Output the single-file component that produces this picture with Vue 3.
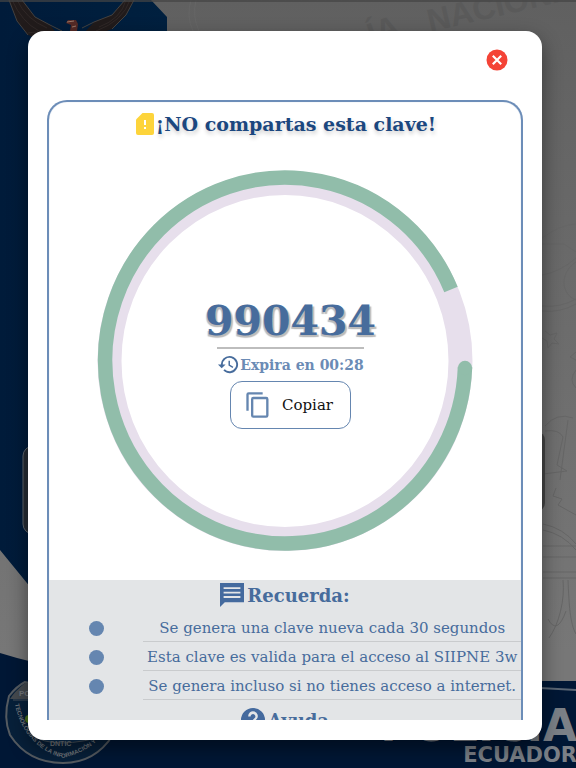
<script setup>
const code = '990434'
const reminders = [
  'Se genera una clave nueva cada 30 segundos',
  'Esta clave es valida para el acceso al SIIPNE 3w',
  'Se genera incluso si no tienes acceso a internet.',
]
</script>

<template>
  <div class="page">
    <svg class="backdrop" viewBox="0 0 576 768" preserveAspectRatio="xMidYMid slice" aria-hidden="true">
      <defs>
        <linearGradient id="grey" x1="0" y1="0" x2="0" y2="1">
          <stop offset="0" stop-color="#606060" />
          <stop offset="0.5" stop-color="#6e6e6e" />
          <stop offset="0.85" stop-color="#777" />
        </linearGradient>
        <linearGradient id="navy" x1="0" y1="0" x2="1" y2="0">
          <stop offset="0" stop-color="#001b3a" />
          <stop offset="1" stop-color="#00203f" />
        </linearGradient>
        <path id="motto" d="M15 704 C20 734 42 753 63 758 C82 754 103 742 114 718" />
      </defs>
      <rect width="576" height="768" fill="url(#grey)" />
      <g fill="none" stroke="#666" stroke-width="1">
        <path d="M542 238q20-14 34-14M542 244h22l12 8M576 262c-16 10-16 32 0 38M542 275q18-3 34-17M542 306q18 2 34-7M542 311q18 2 34-7M545 331l5 4 7-2-3 6 5 5-7-1-4 5-1-7-5-3M576 352l-6 5 6 3M576 370q-8 10 0 18M545 426q12-14 28-8M545 431q14-2 18 6l-6 28 10 6-24 3M568 420l-8 60M556 488l-3 8 9 3-4 6 18 10M543 524q20 4 33 20M543 530q20 4 33 20M543 546h33M543 557h33M543 572h33M543 578h33M563 580c2 20-4 44-14 58M568 580c1 24 2 44 8 54M548 619q9 17 18-8" />
        <path d="M191 0q-5 16 2 31M196 0q-4 16 3 31" />
      </g>
      <g class="watermark">
        <text transform="translate(372 46) rotate(-20)">ÍA</text>
        <text transform="translate(430 32) rotate(-13)">NACIONAL</text>
      </g>
      <path d="M0 0H151L167 17V45H40V599L0 550z" fill="url(#navy)" />
      <path d="M0 653Q60 672 160 681H576V768H0z" fill="#001735" />
      <path d="M540 687L576 689V691L540 689z" fill="#5a6674" />
      <g class="eagle">
        <path d="M9 0L17 21 28 35 38 39H61L50 25 35 17 22 0z" fill="#211b1b" />
        <path d="M134 0L126 15 112 29 99 34H83L94 22 112 15 125 0z" fill="#211b1b" />
        <path d="M12 0q10 22 27 31M17 0q9 19 30 28M28 33q9-2 22 1M126 0q-5 19-27 27M130 0q-7 21-34 31" fill="none" stroke="#302827" />
        <path d="M9 0l8 21 11 14M22 0l13 17 15 8 12 6M134 0l-8 15-14 14M125 0l-13 15-18 7-12 6" fill="none" stroke="#44413f" />
        <path d="M70 31l1-6-5-2 2-3h8l2 4-1 7z" fill="#562a26" />
        <path d="M67 22l7-1M72 27l4-1" stroke="#9a7769" />
      </g>
      <rect x="23" y="446" width="20" height="88" rx="10" fill="#272d35" stroke="#60666d" />
      <rect x="520" y="432" width="25" height="79" rx="8" fill="#454545" />
      <g class="crest">
        <path d="M25 682Q17 686 9 696Q3 718 10 735Q28 763 63 763Q95 763 113 735V700z" fill="#07203a" stroke="#555b61" stroke-width="2" />
        <path d="M25 683Q14 692 10 699H30V682z" fill="#454a4f" />
        <path d="M13 700h18v34q22 18 80 0v-34" fill="#0b3155" stroke="#48515a" />
        <circle cx="29" cy="719" r="4" fill="#4a721b" />
        <text x="19" y="696" font-size="8">PO</text>
        <text x="50" y="746" font-size="7">DNTIC</text>
        <text font-size="6"><textPath href="#motto">TECNOLOGÍAS DE LA INFORMACIÓN Y C</textPath></text>
      </g>
      <g class="police">
        <text x="577" y="741" font-size="44" text-anchor="end">POLICÍA</text>
        <text x="577" y="762" font-size="21" text-anchor="end">ECUADOR</text>
      </g>
      <rect width="576" height="2" fill="#444" fill-opacity="0.7" />
    </svg>

    <main class="overlay">
      <section class="dialog" role="dialog" aria-labelledby="warning">
        <header class="bar">
          <button class="close" type="button" aria-label="Cerrar">
            <svg viewBox="0 0 22 22"><circle cx="11" cy="11" r="10.5" fill="#f44336" /><path d="M6.8 6.8l8.4 8.4M15.2 6.8l-8.4 8.4" stroke="#fff" stroke-width="2.2" /></svg>
          </button>
        </header>

        <div class="card">
          <h1 id="warning" class="warning">
            <svg viewBox="0 0 18 22"><path d="M6.5 0H16q2 0 2 2v18q0 2-2 2H2q-2 0-2-2V6.500z" fill="#fdd43b" /><path d="M8 7h2v5H8zM8 14h2v2H8z" fill="#fff" /></svg>
            <span>¡NO compartas esta clave!</span>
          </h1>

          <div class="timer">
            <svg class="ring" viewBox="0 0 376 382" aria-hidden="true">
              <ellipse cx="188" cy="191" rx="175.5" ry="178" fill="none" stroke="#e7dfec" stroke-width="24" />
              <path d="M368 197A180 183 0 1 1 354 119.500" fill="none" stroke="#91bdaa" stroke-width="14.500" />
              <circle cx="368" cy="198" r="7.200" fill="#91bdaa" />
            </svg>
            <div class="readout">
              <output class="code">{{ code }}</output>
              <p class="expires">
                <svg viewBox="0 0 24 24"><path d="M13 3a9 9 0 0 0-9 9H1l3.900 3.900L9 12H6a7 7 0 1 1 2.050 4.950L6.640 18.360A9 9 0 1 0 13 3zm-1 5v5l4.280 2.540.720-1.210-3.500-2.080V8z" fill="#476c9c" /></svg>
                <span>Expira en 00:28</span>
              </p>
              <button class="copy" type="button">
                <svg viewBox="0 0 24 24"><path d="M16 1H4a2 2 0 0 0-2 2v14h2V3h12zm3 4H8a2 2 0 0 0-2 2v14a2 2 0 0 0 2 2h11a2 2 0 0 0 2-2V7a2 2 0 0 0-2-2zm0 16H8V7h11z" fill="#6586b0" /></svg>
                <span>Copiar</span>
              </button>
            </div>
          </div>

          <section class="info">
            <h2 class="heading">
              <svg viewBox="2 2 20 20"><path d="M2 2h20v16H6l-4 4zM5 5.500V7h14V5.500zm0 3.700v1.500h14V9.200zm0 3.700v1.500h14v-1.500z" fill="#446a9e" fill-rule="evenodd" /></svg>
              <span>Recuerda:</span>
            </h2>
            <ul class="list">
              <li v-for="item in reminders" :key="item">
                <span class="dot"></span>
                <span class="line">{{ item }}</span>
              </li>
            </ul>
            <h2 class="heading help">
              <svg viewBox="2 2 20 20"><path d="M12 2a10 10 0 1 0 0 20 10 10 0 0 0 0-20zm1 17h-2v-2h2zm2.070-7.750l-.900.920C13.450 12.900 13 13.500 13 15h-2v-.500c0-1.100.450-2.100 1.170-2.830l1.240-1.260A2 2 0 1 0 10 9H8a4 4 0 1 1 7.070 2.250z" fill="#446a9e" /></svg>
              <span>Ayuda</span>
            </h2>
          </section>
        </div>
      </section>
    </main>
  </div>
</template>

<style>
body {
  margin: 0;
}
</style>

<style scoped>
* {
  box-sizing: border-box;
}
.page {
  position: relative;
  height: 100vh;
  overflow: hidden;
  font-family: "DejaVu Serif", serif;
  color: #476c9c;
}
.backdrop {
  position: absolute;
  inset: 0;
  width: 100%;
  height: 100%;
}
.watermark text {
  font: bold 32px "Liberation Sans", sans-serif;
  fill: #5a5a5a;
}
.crest text {
  font-family: "Liberation Sans", sans-serif;
  font-weight: bold;
  fill: #72777c;
}
.police text {
  font-family: "DejaVu Sans", sans-serif;
  font-weight: bold;
  fill: #7b8087;
}
.overlay {
  position: relative;
  height: 100%;
  padding: 31px 34px 28px 28px;
}
.dialog {
  display: flex;
  flex-direction: column;
  height: 100%;
  padding: 0 19px 20px;
  background: #fff;
  border-radius: 16px;
  box-shadow: 0 8px 20px rgba(0, 0, 0, 0.45);
}
.bar {
  display: flex;
  flex: none;
  justify-content: flex-end;
  height: 69px;
  padding: 18px 15px 0 0;
}
.close {
  width: 22px;
  height: 22px;
  padding: 0;
  border: 0;
  background: none;
}
svg {
  display: block;
  flex: none;
}
.close svg {
  width: 22px;
  height: 22px;
}
.card {
  flex: 1;
  min-height: 0;
  overflow: hidden;
  border: 2px solid #6c8db8;
  border-bottom: 0;
  border-radius: 20px 20px 0 0;
  box-shadow: inset 0 0 1px #a9bdd6;
}
.warning {
  display: flex;
  align-items: center;
  justify-content: center;
  height: 44px;
  margin: 0;
  gap: 2px;
  padding-left: 2px;
  font-size: 19px;
  line-height: 24px;
  color: #1b477f;
  text-shadow: 1px 3px 4px rgba(0, 0, 0, 0.2);
}
.warning svg {
  width: 18px;
  height: 22px;
}
.timer {
  display: grid;
  place-items: center;
  padding: 24px 1px 28px;
}
.ring,
.readout {
  grid-area: 1 / 1;
}
.ring {
  width: 80%;
  overflow: visible;
}
.readout {
  display: flex;
  flex-direction: column;
  align-items: center;
  padding: 3px 0 0 11px;
}
.code {
  font-size: 41px;
  font-weight: bold;
  line-height: 48px;
  text-shadow: -1px 2px 1px #bbb, 2px 2px 1px #bbb;
}
.expires {
  display: flex;
  align-items: center;
  height: 34px;
  margin: 2px 0 0;
  border-top: 2px solid #bdbdbd;
  font-size: 14px;
  font-weight: bold;
  color: #6b8bb5;
}
.expires svg {
  width: 23px;
  height: 23px;
}
.copy {
  display: flex;
  align-items: center;
  gap: 10px;
  height: 48px;
  padding: 0 17px 0 13px;
  border: 1px solid #6586b0;
  border-radius: 12px;
  background: #fff;
  font-family: inherit;
  font-size: 15px;
  color: #111;
}
.copy svg {
  width: 28px;
  height: 28px;
}
.info {
  background: #e3e5e7;
}
.heading {
  display: flex;
  align-items: center;
  justify-content: center;
  gap: 3px;
  height: 30px;
  margin: 0;
  font-size: 18px;
}
.heading svg {
  width: 24px;
  height: 24px;
}
.help {
  height: 38px;
}
.list {
  margin: 0;
  padding: 4px 0 0;
  list-style: none;
}
.list li {
  display: grid;
  grid-template-columns: 1fr 4fr;
  align-items: center;
  height: 29px;
}
.dot {
  justify-self: center;
  width: 15px;
  height: 15px;
  border-radius: 50%;
  background: #6586b0;
}
.line {
  height: 27px;
  border-bottom: 1px solid #c9cbcd;
  font-size: 15px;
  line-height: 26px;
  text-align: center;
  white-space: nowrap;
}
</style>
